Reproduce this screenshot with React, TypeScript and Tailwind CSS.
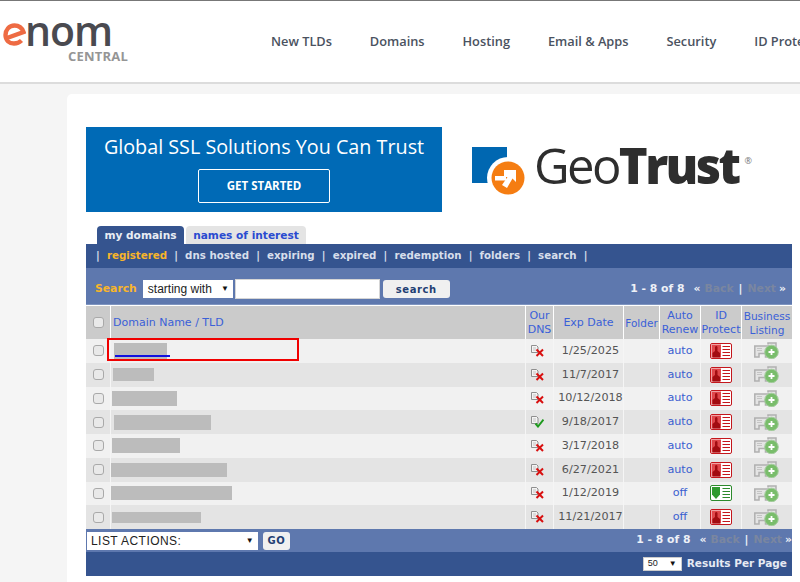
import React from "react";

const cols = "grid grid-cols-[24px_415px_28px_70px_36px_41px_41px_51px]";
const rows = [
  { m: 3, w: 53, h: 16, date: "1/25/2025", renew: "auto", dns: false, id: "red", first: true },
  { m: 2, w: 41, h: 13, date: "11/7/2017", renew: "auto", dns: false, id: "red" },
  { m: 1, w: 65, h: 15, date: "10/12/2018", renew: "auto", dns: false, id: "red" },
  { m: 3, w: 97, h: 15, date: "9/18/2017", renew: "auto", dns: true, id: "red" },
  { m: 1, w: 68, h: 15, date: "3/17/2018", renew: "auto", dns: false, id: "red" },
  { m: 0, w: 116, h: 14, date: "6/27/2021", renew: "auto", dns: false, id: "red" },
  { m: 0, w: 121, h: 14, date: "1/12/2019", renew: "off", dns: false, id: "green" },
  { m: 1, w: 89, h: 11, date: "11/21/2017", renew: "off", dns: false, id: "red" },
];

function DnsIcon({ ok }: { ok: boolean }) {
  return (
    <svg width="13" height="12" viewBox="0 0 13 12">
      <path d="M.5 .5H5.5L7 2V7.5H.5Z" fill="#f4f4f4" stroke="#8f8f8f" />
      <path d="M2 3H5M2 5H5" stroke="#c4c4c4" />
      {ok ? (
        <path d="M4.5 7.5L7 10.5L12.5 3.5" fill="none" stroke="#1e9a1e" strokeWidth="2" />
      ) : (
        <path d="M5.5 4.5L12 11M12 4.5L5.5 11" stroke="#d80f0f" strokeWidth="2" />
      )}
    </svg>
  );
}

function IdIcon({ kind }: { kind: string }) {
  const c = kind === "green" ? "#2c8a2c" : "#c4161c";
  return (
    <svg width="22" height="16" viewBox="0 0 22 16">
      <rect x=".5" y=".5" width="21" height="15" rx="1.5" fill="#fff" stroke={c} />
      {kind === "green" ? (
        <path d="M2 2H10V9.5L6 14L2 9.5Z" fill="#2f9a2f" />
      ) : (
        <>
          <rect x="1.5" y="1.5" width="9.5" height="13" fill="#e0474b" />
          <path d="M5 4.2A1.3 1.7 0 0 1 7.5 4.2V8L10 10V14.5H2.5V10L5 8Z" fill="#a20c11" />
        </>
      )}
      <path d="M12.5 3.5H20M12.5 6.5H20M12.5 9.5H20M12.5 12.5H20" stroke={c} strokeWidth="1.2" />
    </svg>
  );
}

function BizIcon() {
  return (
    <svg width="25" height="17" viewBox="0 0 25 17">
      <path d="M14 2.5V1H22V7M.8 4H15V15H11.5V11.5H5V15H.8Z" fill="#e4e4e4" stroke="#b0b0b0" strokeWidth="1.5" />
      <path d="M3 6.5H8M3 8.5H8" stroke="#c4c4c4" />
      <circle cx="17.5" cy="10" r="6.8" fill="#79bd6b" stroke="#a5cc9f" />
      <path d="M17.5 7V13M14.5 10H20.5" stroke="#fff" strokeWidth="1.8" />
    </svg>
  );
}

function Box() {
  return <span className="block h-[11px] w-[11px] rounded-[3px] border border-[#a9a9a9] bg-[#e9e9e9]" />;
}

function Caret() {
  return <span className="text-[8px] leading-none text-[#111]">▼</span>;
}

function Pager({ gap }: { gap: number }) {
  return (
    <div className="flex items-center whitespace-nowrap font-['DejaVu_Sans',sans-serif] text-[10.8px] font-bold text-[#eef1f7]" style={{ marginRight: gap }}>
      <span>1 - 8 of 8</span>
      <span className="ml-[9px]">«</span>
      <span className="ml-[4px] text-[#7a86a0]">Back</span>
      <span className="mx-[5px]">|</span>
      <span className="text-[#7a86a0]">Next</span>
      <span className="ml-[3px]">»</span>
    </div>
  );
}

export default function App() {
  return (
    <div className="h-[582px] w-[800px] overflow-hidden bg-[#f5f5f5] font-['Liberation_Sans',sans-serif]">
      <header className="flex h-[84px] border-t border-b-[2px] border-t-[#777] border-b-[#dcdcdc] bg-white">
        <div className="relative w-[271px] shrink-0">
          <svg width="23" height="23" viewBox="0 0 23 23" className="absolute left-[3px] top-[22px]">
            <path d="M4 15L20.5 9C19 5 15.5 2.5 11.5 2.5C6 2.5 2.5 7 2.5 12C2.5 17.5 6.5 20.5 11 20.5C14 20.5 16.5 19.5 18.5 17.5" fill="none" stroke="#ee6b43" strokeWidth="4.4" />
          </svg>
          <div className="absolute left-[25px] top-[11px] font-['Open_Sans',sans-serif] text-[41px] font-semibold leading-[36px] tracking-[-1px] text-[#4a4a50]">nom</div>
          <div className="absolute left-[68px] top-[47px] font-['Open_Sans',sans-serif] text-[13px] font-bold leading-[16px] tracking-[0.2px] text-[#959595]">CENTRAL</div>
        </div>
        <nav className="flex items-center gap-[37.9px] whitespace-nowrap font-['Open_Sans',sans-serif] text-[12.8px] font-semibold text-[#4a5260]">
          <span>New TLDs</span>
          <span>Domains</span>
          <span>Hosting</span>
          <span>Email &amp; Apps</span>
          <span>Security</span>
          <span>ID Protection</span>
        </nav>
      </header>

      <main className="ml-[67px] mt-[10px] h-[500px] rounded-tl-[5px] bg-white pl-[19px] pt-[33px]">
        <div className="flex items-center">
          <div className="flex h-[85px] w-[356px] flex-col items-center bg-[#006ab6] pt-[6px] font-['Open_Sans',sans-serif] text-white">
            <div className="whitespace-nowrap text-[19.75px] leading-[28px]">Global SSL Solutions You Can Trust</div>
            <div className="mt-[8px] flex h-[34px] w-[132px] items-center justify-center rounded-[2px] border-[1.5px] border-white text-[11.5px] font-bold">GET STARTED</div>
          </div>
          <div className="ml-[29px] flex h-[50px] items-start">
            <svg width="55" height="48" viewBox="0 0 55 48" className="mt-[2px]">
              <rect x="1" y="0" width="35" height="36" fill="#0067b1" />
              <circle cx="37" cy="31" r="21" fill="#fff" />
              <rect x="36" y="0" width="12" height="10" fill="#fff" />
              <circle cx="37" cy="31" r="16.5" fill="#f57d12" />
              <path d="M33 23H45V35L41.5 31.5L36 41L31 38L36.5 30H33Z" fill="#fff" />
              <path d="M24 33.5V29H35V33.5Z" fill="#fff" />
            </svg>
            <div className="-mt-[5px] ml-[8px] flex items-start font-['Open_Sans',sans-serif] text-[49px] leading-[50px] tracking-[-2.6px] text-[#2e2e2e]">
              <span>Geo</span>
              <span className="font-extrabold">Trust</span>
              <span className="ml-[6px] mt-[16px] text-[9px] leading-[10px] tracking-normal text-[#777]">®</span>
            </div>
          </div>
        </div>

        <div className="mt-[14px] w-[706px]">
          <div className="ml-[11px] flex h-[18px] items-stretch font-['DejaVu_Sans',sans-serif] text-[10.6px] font-bold leading-[18px]">
            <div className="w-[87px] rounded-t-[4px] bg-[#35548f] text-center text-[#e9edf4]">my domains</div>
            <div className="ml-[2px] w-[120px] rounded-t-[4px] bg-[#e4e4e4] text-center text-[#2a4bd0]">names of interest</div>
          </div>

          <div className="flex h-[24px] items-center gap-[7.15px] whitespace-nowrap bg-[#35548f] pl-[10px] font-['DejaVu_Sans',sans-serif] text-[10.25px] font-bold text-[#d7deeb]">
            <span>|</span><span className="text-[#f8b52a]">registered</span>
            <span>|</span><span>dns hosted</span>
            <span>|</span><span>expiring</span>
            <span>|</span><span>expired</span>
            <span>|</span><span>redemption</span>
            <span>|</span><span>folders</span>
            <span>|</span><span>search</span>
            <span>|</span>
          </div>

          <div className="flex h-[37px] items-center border-b border-b-[#7f95c0] bg-[#5e78ae] pl-[9px] pt-[6px]">
            <span className="font-['DejaVu_Sans',sans-serif] text-[10.8px] font-bold text-[#f8b52a]">Search</span>
            <div className="ml-[6px] flex h-[18px] w-[90px] items-center justify-between bg-white pl-[5px] pr-[4px] text-[12px] text-[#222]">
              <span>starting with</span><Caret />
            </div>
            <div className="ml-[2px] h-[20px] w-[145px] border border-[#d5d5d5] bg-white" />
            <div className="ml-[3px] flex h-[18px] w-[67px] items-center justify-center rounded-[3px] bg-[#f0f0f0] font-['DejaVu_Sans',sans-serif] text-[10px] font-bold tracking-[0.6px] text-[#1f3f73]">search</div>
            <div className="flex-1" />
            <Pager gap={6} />
          </div>

          <div className="h-[1px] bg-white" />
          <div className={`${cols} h-[33px] items-stretch bg-white font-['DejaVu_Sans',sans-serif] text-[11px] leading-[14px] text-[#3a60d8]`}>
            <div className="flex items-center justify-center bg-[#cbcbcb]"><Box /></div>
            <div className="ml-px flex items-center bg-[#cbcbcb] pl-[2px]">Domain Name / TLD</div>
            <div className="ml-px flex items-center justify-center bg-[#cbcbcb] text-center">Our DNS</div>
            <div className="ml-px flex items-center justify-center bg-[#cbcbcb]">Exp Date</div>
            <div className="ml-px flex items-center justify-center bg-[#cbcbcb] text-[10.5px]">Folder</div>
            <div className="ml-px flex items-center justify-center bg-[#cbcbcb] text-center">Auto Renew</div>
            <div className="ml-px flex items-center justify-center bg-[#cbcbcb] text-center">ID Protect</div>
            <div className="ml-px flex items-center justify-center bg-[#cbcbcb] text-center text-[10.6px]">Business Listing</div>
          </div>

          <div className="relative">
            {rows.map((r, i) => (
              <div key={i} className={`${cols} h-[23.75px] items-stretch font-['DejaVu_Sans',sans-serif] text-[11.2px] text-[#555] ${i % 2 ? "bg-[#e4e4e4]" : "bg-[#f1f1f1]"}`}>
                <div className="flex items-center justify-center"><Box /></div>
                <div className="flex items-center border-l border-l-[#f5f5f5]">
                  <div className="relative" style={{ height: r.h, marginLeft: r.m, width: r.w }}>
                    <div className="h-full w-full bg-[#bcbcbc]" />
                    {r.first && <div className="absolute left-[1px] top-[12px] h-[2px] w-[55px] bg-[#1010e0]" />}
                  </div>
                </div>
                <div className="flex items-center justify-center border-l border-l-[#f5f5f5] pr-[4px]"><DnsIcon ok={r.dns} /></div>
                <div className="flex items-center justify-center border-l border-l-[#f5f5f5] pl-[4px] pt-[1px]">{r.date}</div>
                <div className="border-l border-l-[#f5f5f5]" />
                <div className="flex items-center justify-center border-l border-l-[#f5f5f5] pt-[1px] text-[#3a5fd0]">{r.renew}</div>
                <div className="flex items-center justify-center border-l border-l-[#f5f5f5]"><IdIcon kind={r.id} /></div>
                <div className="flex items-center justify-center border-l border-l-[#f5f5f5] pr-[2px]"><BizIcon /></div>
              </div>
            ))}
            <div className="absolute left-[21px] top-[-1px] h-[23px] w-[192px] border-2 border-[#f00000]" />
          </div>

          <div className="flex h-[23px] items-center bg-[#5e78ae] pl-[1px]">
            <div className="flex h-[18px] w-[171px] items-center justify-between bg-white pl-[4px] pr-[4px] text-[12px] tracking-[0.45px] text-[#222]">
              <span>LIST ACTIONS:</span><Caret />
            </div>
            <div className="ml-[5px] flex h-[18px] w-[27px] items-center justify-center rounded-[3px] bg-[#f0f0f0] font-['DejaVu_Sans',sans-serif] text-[10px] font-bold tracking-[0.6px] text-[#1f3f73]">GO</div>
            <div className="flex-1" />
            <Pager gap={0} />
          </div>
          <div className="flex h-[24px] items-center justify-end bg-[#35548f] pr-[5px]">
            <div className="flex h-[14px] w-[39px] items-center justify-between border border-[#ccc] bg-white pl-[4px] pr-[4px] text-[9px] text-[#222]">
              <span>50</span><Caret />
            </div>
            <span className="ml-[5px] font-['DejaVu_Sans',sans-serif] text-[10.5px] font-bold text-[#e6eaf3]">Results Per Page</span>
          </div>
        </div>
      </main>
    </div>
  );
}
